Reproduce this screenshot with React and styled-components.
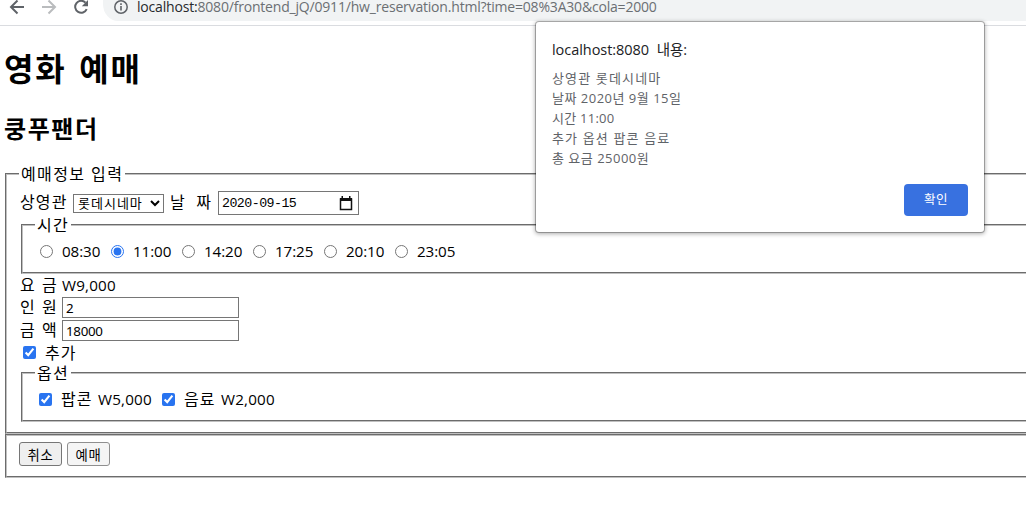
import React from 'react';
import styled, { createGlobalStyle } from 'styled-components';

const Global = createGlobalStyle`
  * { box-sizing: border-box; }
  body { margin: 0; background: #fff; color: #000; overflow: hidden;
    font-family: "Open Sans", "Noto Sans CJK KR", sans-serif; }
`;
const Page = styled.div`
  position: relative; width: 1026px; height: 526px; overflow: hidden; background: #fff;
`;
const Toolbar = styled.header`
  display: flex; align-items: flex-start; height: 26px;
  border-bottom: 1px solid #dadce0;
`;
const NavIcons = styled.div`
  display: flex; width: 103px; height: 17px; padding-left: 9px; gap: 16px;
  svg { display: block; flex: none; }
`;
const Address = styled.div`
  display: flex; flex: 1; height: 21px; padding-left: 11px; background: #f1f3f4;
  border-bottom-left-radius: 15px 17px;
  svg { flex: none; }
`;
const Url = styled.div`
  margin-left: 9px; font-size: 14px; line-height: 14px; height: 20px; white-space: nowrap;
  letter-spacing: -0.19px; color: #6b6f73;
  b { font-weight: 400; color: #27292c; }
`;
const Content = styled.main`
  width: 1200px; padding-left: 5px;
`;
const Title = styled.h1`
  margin: 0 0 0 -1px; height: 86px; font-size: 32px; line-height: 85px; font-weight: 700;
  letter-spacing: 1.7px; word-spacing: 3px;
`;
const Subtitle = styled.h2`
  margin: 0 0 0 -1px; height: 51px; font-size: 24px; line-height: 33px; font-weight: 700; letter-spacing: 1.6px;
`;
const Group = styled.fieldset`
  margin: 0; border: 2px groove #c0c0c0; min-width: 0;
  padding: ${p => p.$pad || '0 12px 10px'};
`;
const Legend = styled.legend`
  padding: 0 2px; height: 22px; line-height: 23px; font-size: 16px; letter-spacing: 1.4px;
`;
const Inner = styled(Group)`
  margin: 0 2px; padding: 0 12px; height: 59px;
  ${Legend} { height: 20px; line-height: 21px; }
`;
const Row = styled.div`
  display: flex; align-items: center; height: ${p => p.$h}px; margin-top: ${p => p.$top || 0}px;
  padding-left: ${p => p.$left || 0}px;
`;
const Text = styled.span`
  flex: none; width: ${p => p.$w}px; font-size: ${p => p.$size || 16}px; line-height: 20px;
  padding-bottom: ${p => p.$up || 0}px;
  letter-spacing: ${p => p.$ls ?? 1.1}px; word-spacing: ${p => p.$ws || 0}px; white-space: pre;
`;
const Select = styled.select`
  width: 91px; height: 19px; margin: 0 6px 0 0; padding: 0; border: 1px solid #767676; border-radius: 0;
  background: #fff; color: #000; font: 13px/15px "Liberation Sans", "Noto Sans CJK KR", sans-serif; letter-spacing: 1px;
`;
const DateBox = styled.div`
  display: flex; align-items: center; justify-content: space-between; width: 141px; height: 24px;
  border: 1px solid #767676; padding: 0 5px 0 3px;
  font: 13.3px "Liberation Mono", monospace; letter-spacing: -0.55px;
`;
const Input = styled.input`
  width: 177px; height: 21px; padding: 1px 4px 1px 3px; border: 1px solid #767676; background: #fff; color: #000;
  font: 13.33px "Noto Sans", sans-serif; outline: none; letter-spacing: -0.3px;
`;
const Tick = styled.input`
  flex: none; width: 13px; height: 13px; margin: 0 9px 0 0; accent-color: #2974f0;
`;
const Button = styled.button`
  width: 43px; height: 24px; padding: 0; margin-right: 5px; border: 1px solid ${p => p.$light ? '#8f8f8f' : '#767676'};
  border-radius: 3px; background: ${p => p.$light ? '#f5f5f5' : '#efefef'}; color: #000;
  font: 13.33px "Noto Sans CJK KR", sans-serif; letter-spacing: 0.7px;
`;
const Dialog = styled.section`
  position: absolute; left: 536px; top: 22px; width: 448px; height: 210px; padding: 17px 16px 16px;
  display: flex; flex-direction: column; background: #fff; border-radius: 3px;
  box-shadow: 0 0 0 1px rgba(0,0,0,.25), 0 1px 4px 1px rgba(0,0,0,.32);
`;
const DialogTitle = styled.div`
  height: 29px; font-size: 14.5px; line-height: 21px; letter-spacing: -0.05px; word-spacing: 4px; color: #202124;
`;
const DialogLine = styled.div`
  height: 20px; font-size: 13px; line-height: 20px; letter-spacing: ${p => p.$ls}px; color: #5f6368; white-space: nowrap;
`;
const Confirm = styled.button`
  align-self: flex-end; margin-top: auto; width: 64px; height: 32px; padding: 0 0 3px; border: 0; border-radius: 4px;
  background: #3871e0; color: #fff; font: 12.5px "Noto Sans CJK KR", sans-serif; letter-spacing: 0.5px;
`;

const TIMES = ['08:30', '11:00', '14:20', '17:25', '20:10', '23:05'];
const LINES = [
  { text: '상영관 롯데시네마', ls: 1.15 },
  { text: '날짜 2020년 9월 15일', ls: 0.5 },
  { text: '시간 11:00', ls: 0.25 },
  { text: '추가 옵션 팝콘 음료', ls: 1.15 },
  { text: '총 요금 25000원', ls: 0.5 },
];

export default function App() {
  return (
    <Page>
      <Global />
      <Toolbar>
        <NavIcons>
          <svg width="16" height="17" viewBox="0 0 16 17" fill="none" stroke="#5f6368" strokeWidth="2"><path d="M15 7H2M8.500 .5L2 7l6.500 6.500" /></svg>
          <svg width="16" height="17" viewBox="0 0 16 17" fill="none" stroke="#babcbe" strokeWidth="2"><path d="M1 7h13M7.500 .5L14 7l-6.500 6.500" /></svg>
          <svg width="16" height="17" viewBox="0 0 16 17"><path d="M13.700 9.200A6 6 0 1 1 12.500 2.600" fill="none" stroke="#5f6368" strokeWidth="2" /><path d="M15 0v6.200H8.800z" fill="#5f6368" /></svg>
        </NavIcons>
        <Address>
          <svg width="14" height="15" viewBox="0 0 14 15"><circle cx="7" cy="7" r="6.200" fill="none" stroke="#5f6368" strokeWidth="1.500" /><path d="M7 6v4.500M7 3.300v1.700" stroke="#5f6368" strokeWidth="1.600" /></svg>
          <Url><b>localhost:</b>8080/frontend_jQ/0911/hw_reservation.html?time=08%3A30&amp;cola=2000</Url>
        </Address>
      </Toolbar>
      <Content>
        <Title>영화 예매</Title>
        <Subtitle>쿵푸팬더</Subtitle>
        <Group>
          <Legend>예매정보 입력</Legend>
          <Row $h={24} $top={6} $left={1}>
            <Text $w={53} $up={2}>상영관</Text>
            <Select defaultValue="l"><option value="l">롯데시네마</option></Select>
            <Text $w={48} $up={2}>날  짜</Text>
            <DateBox>
              <span>2020-09-15</span>
              <svg width="14" height="15" viewBox="0 0 14 15"><path d="M1.500 3h11v10.500h-11z" fill="none" stroke="#111" strokeWidth="1.500" /><path d="M1 2h12v3H1zM2.500 0h1.500v3H2.500zM10 0h1.500v3H10z" fill="#111" /></svg>
            </DateBox>
          </Row>
          <Inner>
            <Legend>시간</Legend>
            <Row $h={20} $top={6} $left={5}>
              {TIMES.map(t => (
                <React.Fragment key={t}>
                  <Tick type="radio" name="time" defaultChecked={t === '11:00'} />
                  <Text $w={49} $size={15.2} $ls={-0.1}>{t}</Text>
                </React.Fragment>
              ))}
            </Row>
          </Inner>
          <Row $h={22} $left={1}><Text $w={42} $ws={1}>요 금</Text><Text $w={80} $size={15.2} $ls={0.2}>W9,000</Text></Row>
          <Row $h={23} $left={1}><Text $w={42} $ws={1} $up={2}>인 원</Text><Input defaultValue="2" /></Row>
          <Row $h={23} $left={1}><Text $w={42} $ws={1} $up={2}>금 액</Text><Input defaultValue="18000" /></Row>
          <Row $h={21} $left={4}><Tick type="checkbox" defaultChecked /><Text $w={60}>추가</Text></Row>
          <Inner>
            <Legend>옵션</Legend>
            <Row $h={20} $top={6} $left={4}>
              <Tick type="checkbox" defaultChecked />
              <Text $w={37}>팝콘</Text><Text $w={64} $size={15.2} $ls={0.2}>W5,000</Text>
              <Tick type="checkbox" defaultChecked />
              <Text $w={37}>음료</Text><Text $w={64} $size={15.2} $ls={0.2}>W2,000</Text>
            </Row>
          </Inner>
        </Group>
        <Group $pad="6px 12px 10px">
          <Row $h={24}><Button>취소</Button><Button $light>예매</Button></Row>
        </Group>
      </Content>
      <Dialog>
        <DialogTitle>localhost:8080 내용:</DialogTitle>
        {LINES.map(l => <DialogLine key={l.text} $ls={l.ls}>{l.text}</DialogLine>)}
        <Confirm>확인</Confirm>
      </Dialog>
    </Page>
  );
}
